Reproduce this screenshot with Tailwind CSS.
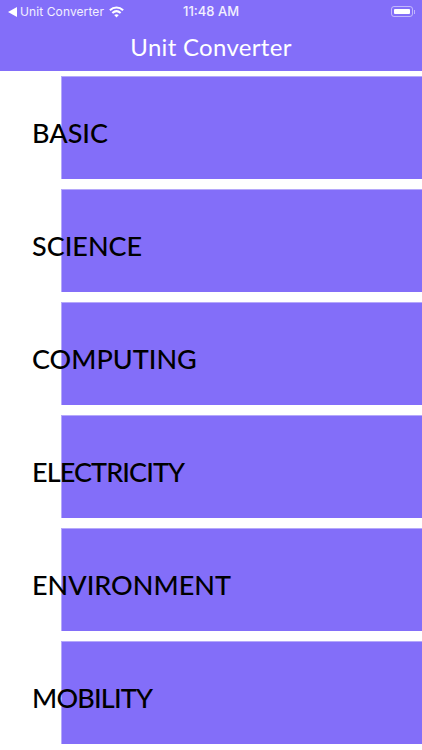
<!DOCTYPE html>
<html lang="en">
<head>
    <meta charset="UTF-8">
    <meta name="viewport" content="width=device-width, initial-scale=1.0">
    <title>Unit Converter</title>
    <script src="https://cdn.jsdelivr.net/npm/@tailwindcss/browser@4"></script>
</head>
<body class="bg-white font-['Lato',sans-serif] w-[422px] h-[750px] overflow-hidden">
    <!-- Status bar + title -->
    <header class="bg-[#836ef9] h-[71px] text-white">
        <div class="relative flex items-center h-[23px] pl-[8px] pr-[7px] text-[12px] font-['Inter',sans-serif] text-white/90">
            <svg class="w-[9px] h-[10px] mr-[3px]" viewBox="0 0 9 10"><path d="M0 5 L9 0 L9 10 Z" fill="white"/></svg>
            <span class="font-normal tracking-[0.1px]">Unit Converter</span>
            <svg class="w-[15px] h-[12px] ml-[5px]" viewBox="0 0 17 13" fill="none" stroke="white" stroke-width="2.4">
                <path d="M1 4.6 C5.5 0.4 11.5 0.4 16 4.6"/>
                <path d="M3.8 7.6 C6.6 5.1 10.4 5.1 13.2 7.6"/>
                <path d="M8.5 12.6 L5.9 10 C7.4 8.8 9.6 8.8 11.1 10 Z" fill="white" stroke="none"/>
            </svg>
            <span class="absolute left-[183px] text-[13px] font-medium">11:48 AM</span>
            <div class="ml-auto flex items-center">
                <div class="w-[22px] h-[11px] rounded-[3px] border border-white/50 p-[2px]">
                    <div class="w-full h-full bg-white rounded-[1px]"></div>
                </div>
                <div class="w-[1px] h-[4px] bg-white/50 ml-[1px]"></div>
            </div>
        </div>
        <h1 class="text-center text-[24px] leading-[48px] font-normal tracking-[0.3px]">Unit Converter</h1>
    </header>

    <!-- Category list -->
    <main class="flex flex-col gap-[10px] pt-[5px]">
        <div class="grid items-center h-[103px]">
            <div class="col-start-1 row-start-1 h-full ml-[61px] bg-[#836ef9] border-t border-l border-[#b5a8fb]"></div>
            <span class="col-start-1 row-start-1 z-10 ml-[32px] pt-[11px] text-[27px] font-medium text-black">BASIC</span>
        </div>
        <div class="grid items-center h-[103px]">
            <div class="col-start-1 row-start-1 h-full ml-[61px] bg-[#836ef9] border-t border-l border-[#b5a8fb]"></div>
            <span class="col-start-1 row-start-1 z-10 ml-[32px] pt-[11px] text-[27px] font-medium text-black">SCIENCE</span>
        </div>
        <div class="grid items-center h-[103px]">
            <div class="col-start-1 row-start-1 h-full ml-[61px] bg-[#836ef9] border-t border-l border-[#b5a8fb]"></div>
            <span class="col-start-1 row-start-1 z-10 ml-[32px] pt-[11px] text-[27px] font-medium text-black">COMPUTING</span>
        </div>
        <div class="grid items-center h-[103px]">
            <div class="col-start-1 row-start-1 h-full ml-[61px] bg-[#836ef9] border-t border-l border-[#b5a8fb]"></div>
            <span class="col-start-1 row-start-1 z-10 ml-[32px] pt-[11px] text-[27px] font-medium tracking-[-0.9px] text-black">ELECTRICITY</span>
        </div>
        <div class="grid items-center h-[103px]">
            <div class="col-start-1 row-start-1 h-full ml-[61px] bg-[#836ef9] border-t border-l border-[#b5a8fb]"></div>
            <span class="col-start-1 row-start-1 z-10 ml-[32px] pt-[11px] text-[27px] font-medium text-black">ENVIRONMENT</span>
        </div>
        <div class="grid items-center h-[103px]">
            <div class="col-start-1 row-start-1 h-full ml-[61px] bg-[#836ef9] border-t border-l border-[#b5a8fb]"></div>
            <span class="col-start-1 row-start-1 z-10 ml-[32px] pt-[11px] text-[27px] font-medium tracking-[-0.8px] text-black">MOBILITY</span>
        </div>
    </main>
</body>
</html>
